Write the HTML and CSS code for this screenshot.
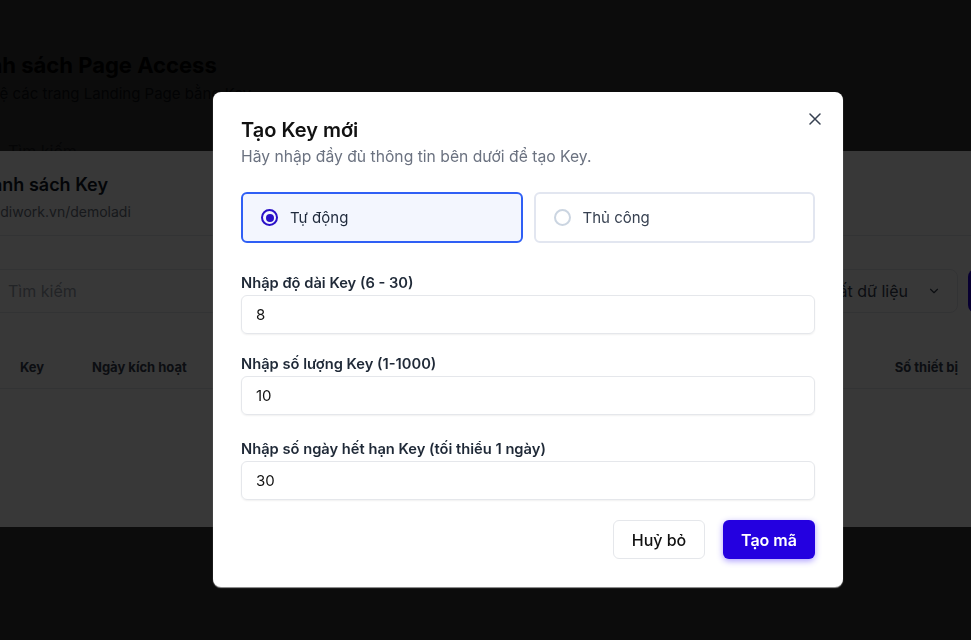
FILE: index.html
```html
<!DOCTYPE html>
<html lang="vi">
<head>
<meta charset="utf-8">
<title>Danh sách Page Access</title>
<link rel="stylesheet" href="styles.css">
</head>
<body>

<!-- trang chính -->
<div class="page">
  <h1 class="page-title">Danh sách Page Access</h1>
  <p class="page-desc">Bảo vệ các trang Landing Page bằng Key</p>
  <div class="page-search">Tìm kiếm</div>
</div>

<div class="backdrop"></div>

<!-- danh sách key -->
<div class="sheet">
  <div class="sheet-head">
    <h2 class="sheet-title">Danh sách Key</h2>
    <p class="sheet-url">ladiwork.vn/demoladi</p>
  </div>
  <div class="toolbar">
    <div class="search">Tìm kiếm</div>
    <div class="select">
      <span>Xuất dữ liệu</span>
      <svg width="14" height="14" viewBox="0 0 24 24" fill="none" stroke="currentColor" stroke-width="2" stroke-linecap="round" stroke-linejoin="round"><path d="M6 9l6 6 6-6"/></svg>
    </div>
    <div class="add-btn">Tạo Key</div>
  </div>
  <div class="table-head">
    <span class="th-key">Key</span>
    <span class="th-date">Ngày kích hoạt</span>
    <span class="th-fill"></span>
    <span class="th-device">Số thiết bị</span>
  </div>
</div>

<div class="backdrop"></div>

<!-- popup tạo key -->
<div class="modal-layer">
  <div class="modal">
    <button class="close-btn" type="button">
      <svg width="12" height="12" viewBox="0 0 12 12" fill="none" stroke="currentColor" stroke-width="1.5" stroke-linecap="round"><path d="M1 1l10 10M11 1L1 11"/></svg>
    </button>
    <h3 class="modal-title">Tạo Key mới</h3>
    <p class="modal-desc">Hãy nhập đầy đủ thông tin bên dưới để tạo Key.</p>

    <div class="modes">
      <label class="mode active"><span class="radio"></span>Tự động</label>
      <label class="mode"><span class="radio"></span>Thủ công</label>
    </div>

    <div class="field f1">
      <div class="field-label">Nhập độ dài Key (6 - 30)</div>
      <div class="field-input">8</div>
    </div>
    <div class="field f2">
      <div class="field-label">Nhập số lượng Key (1-1000)</div>
      <div class="field-input">10</div>
    </div>
    <div class="field f3">
      <div class="field-label">Nhập số ngày hết hạn Key (tối thiểu 1 ngày)</div>
      <div class="field-input">30</div>
    </div>

    <div class="actions">
      <button class="btn btn-cancel" type="button">Huỷ bỏ</button>
      <button class="btn btn-submit" type="button">Tạo mã</button>
    </div>
  </div>
</div>

</body>
</html>
```

FILE: styles.css
```css
* {
  box-sizing: border-box;
}

html, body {
  margin: 0;
  padding: 0;
  height: 100%;
  overflow: hidden;
}

body {
  font-family: Inter, "Noto Sans", Arial, sans-serif;
  background-color: #fff;
  color: #111827;
}

/* trang chính */
.page {
  margin-left: -40px;
  padding-top: 50px;
}

.page-title {
  margin: 0;
  font-size: 22px;
  line-height: 30px;
  font-weight: 700;
  color: #000;
}

.page-desc {
  margin: 0;
  font-size: 15px;
  line-height: 28px;
  color: #374151;
}

.page-search {
  margin-top: 33px;
  padding-left: 48px;
  font-size: 16px;
  color: #6b7280;
}

.backdrop {
  position: fixed;
  inset: 0;
  background-color: rgba(0, 0, 0, 0.78);
}

/* danh sách key */
.sheet {
  position: absolute;
  top: 151px;
  left: -45px;
  width: 1147px;
  height: 376px;
  background-color: #fff;
  padding: 0 24px;
}

.sheet-head {
  padding-top: 22px;
  padding-bottom: 13px;
  border-bottom: 1px solid #e5e7eb;
}

.sheet-title {
  margin: 0;
  font-size: 18px;
  line-height: 24px;
  font-weight: 600;
  color: #111827;
}

.sheet-url {
  margin: 5px 0 0 0;
  font-size: 14px;
  line-height: 20px;
  color: #6b7280;
  padding-left: 10px;
}

.toolbar {
  display: flex;
  gap: 10px;
  margin-top: 33px;
  height: 44px;
}

.search {
  flex: 1;
  border-top: 1px solid #e5e7eb;
  border-bottom: 1px solid #e5e7eb;
  padding-left: 29px;
  display: flex;
  align-items: center;
  font-size: 16px;
  color: #9ca3af;
}

.select {
  width: 172px;
  border: 1px solid #e5e7eb;
  border-radius: 8px;
  display: flex;
  align-items: center;
  justify-content: flex-end;
  gap: 19px;
  padding: 0 16px 0 14px;
  font-size: 16px;
  color: #374151;
  white-space: nowrap;
}

.add-btn {
  width: 110px;
  border-radius: 8px;
  background-color: #2400e0;
  color: #fff;
  display: flex;
  align-items: center;
  justify-content: center;
  font-weight: 600;
}

.table-head {
  display: flex;
  align-items: center;
  height: 44px;
  margin-top: 32px;
  border-bottom: 1px solid #e5e7eb;
  font-size: 13px;
  font-weight: 700;
  color: #374151;
}

.th-key {
  width: 113px;
  padding-left: 41px;
}

.th-fill {
  flex: 1;
}

.th-device {
  padding-right: 120px;
}

/* popup */
.modal-layer {
  position: fixed;
  inset: 0;
  display: flex;
  align-items: flex-start;
  padding: 92px 0 0 213px;
}

.modal {
  position: relative;
  width: 630px;
  background-color: #fff;
  border-radius: 8px;
  padding: 24px 28px 28px;
  box-shadow: 0 1px 1px rgba(190, 190, 190, 0.8);
}

.close-btn {
  position: absolute;
  top: 19px;
  right: 20px;
  width: 16px;
  height: 16px;
  padding: 0;
  border: none;
  background: none;
  color: #374151;
  display: flex;
  align-items: center;
  justify-content: center;
  cursor: pointer;
}

.modal-title {
  margin: 0;
  font-size: 20px;
  line-height: 28px;
  font-weight: 600;
  color: #111;
}

.modal-desc {
  margin: 2px 0 0 0;
  font-size: 15.7px;
  line-height: 22px;
  color: #6b7280;
}

.modes {
  display: flex;
  gap: 11px;
  margin-top: 24px;
}

.mode {
  flex: 1;
  height: 51px;
  border: 2px solid #e2e6f0;
  border-radius: 6px;
  display: flex;
  align-items: center;
  gap: 12px;
  padding-left: 18px;
  font-size: 15px;
  color: #374151;
}

.mode.active {
  border-color: #2f5ff5;
  background-color: #f3f6fe;
  color: #1e293b;
}

.radio {
  width: 17px;
  height: 17px;
  border-radius: 50%;
  border: 2px solid #cbd5e1;
  display: flex;
  align-items: center;
  justify-content: center;
}

.mode.active .radio {
  border-color: #2a10c8;
}

.mode.active .radio::after {
  content: "";
  width: 8px;
  height: 8px;
  border-radius: 50%;
  background-color: #2a10c8;
}

.field-label {
  font-size: 14.7px;
  line-height: 20px;
  font-weight: 600;
  color: #1f2937;
  margin-bottom: 2px;
}

.f1 { margin-top: 30px; }
.f2 { margin-top: 20px; }
.f3 { margin-top: 24px; }

.field-input {
  height: 39px;
  border: 1px solid #e5e7eb;
  border-radius: 6px;
  box-shadow: 0 1px 2px rgba(0, 0, 0, 0.06);
  display: flex;
  align-items: center;
  padding: 0 14px;
  font-size: 15px;
  color: #111;
}

.actions {
  display: flex;
  justify-content: flex-end;
  gap: 18px;
  margin-top: 20px;
}

.btn {
  width: 92px;
  height: 39px;
  border-radius: 6px;
  font-family: inherit;
  font-size: 16px;
  cursor: pointer;
}

.btn-cancel {
  background-color: #fff;
  border: 1px solid #e5e7eb;
  color: #111;
  font-weight: 500;
}

.btn-submit {
  background-color: #2400e0;
  border: none;
  color: #fff;
  font-weight: 600;
  box-shadow: 0 2px 6px rgba(70, 40, 255, 0.45);
}
```
